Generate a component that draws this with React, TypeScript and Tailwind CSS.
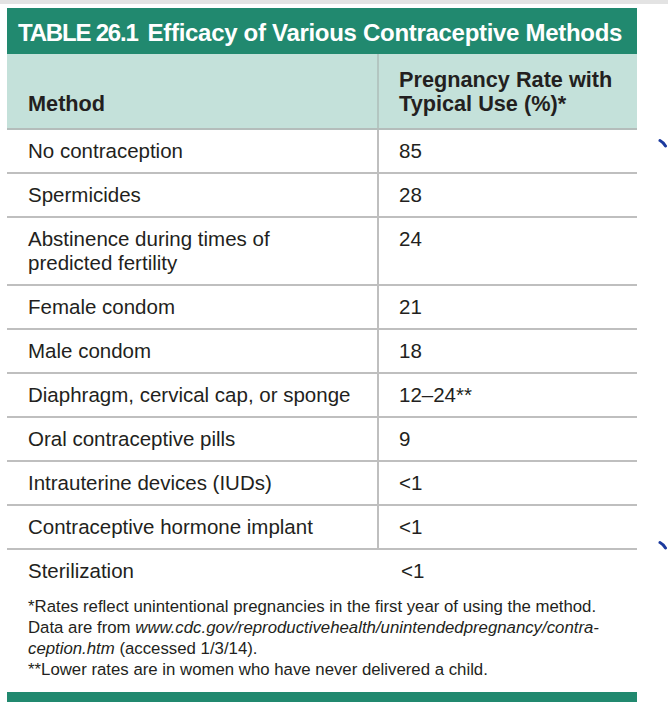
const rows: { method: React.ReactNode; rate: string }[] = [
  { method: "No contraception", rate: "85" },
  { method: "Spermicides", rate: "28" },
  {
    method: (
      <>
        Abstinence during times of
        <br />
        predicted fertility
      </>
    ),
    rate: "24",
  },
  { method: "Female condom", rate: "21" },
  { method: "Male condom", rate: "18" },
  { method: "Diaphragm, cervical cap, or sponge", rate: "12–24**" },
  { method: "Oral contraceptive pills", rate: "9" },
  { method: "Intrauterine devices (IUDs)", rate: "<1" },
  { method: "Contraceptive hormone implant", rate: "<1" },
];

const Tick = ({ top }: { top: number }) => (
  <svg
    className="absolute left-[658px]"
    style={{ top }}
    width="10"
    height="10"
    viewBox="0 0 10 10"
  >
    <path d="M2 2.5 Q5 4 7.5 8" stroke="#1b3a9e" strokeWidth="3" fill="none" strokeLinecap="round" />
  </svg>
);

export default function App() {
  return (
    <div className="relative w-[668px] h-[702px] overflow-hidden bg-white font-['Liberation_Sans',Arial,sans-serif] text-[#231f20]">
      <div className="h-[4px] bg-[#e3e3e3]" />
      <div className="ml-[7px] mt-[4px] w-[630px]">
        {/* title bar */}
        <div className="flex h-[46px] items-center bg-[#21896f] pl-[11px] pt-[3px] text-[24px] font-bold text-white">
          <span className="tracking-[-1.2px]">TABLE 26.1</span>
          <span className="ml-[10px] tracking-[-0.3px]">Efficacy of Various Contraceptive Methods</span>
        </div>

        {/* header */}
        <div className="grid grid-cols-[372px_1fr] border-b-2 border-[#b4bdbb] bg-[#c4e1da] text-[21.7px] font-bold leading-[24px]">
          <div className="flex items-end border-r-2 border-[#b3c6c1] pb-[12px] pl-[21px] pt-[14px]">Method</div>
          <div className="pb-[12px] pl-[20px] pt-[14px]">
            Pregnancy Rate with
            <br />
            Typical Use (%)*
          </div>
        </div>

        {/* body */}
        <div className="text-[20.5px] leading-[24px]">
          {rows.map((r, i) => (
            <div key={i} className="grid grid-cols-[372px_1fr] border-b-2 border-[#bfbfbf]">
              <div className="border-r-2 border-[#bfbfbf] pb-[9px] pl-[21px] pt-[9px]">{r.method}</div>
              <div className="pb-[9px] pl-[20px] pt-[9px]">{r.rate}</div>
            </div>
          ))}
          <div className="grid grid-cols-[372px_1fr]">
            <div className="pb-[9px] pl-[21px] pt-[9px]">Sterilization</div>
            <div className="pb-[9px] pl-[22px] pt-[9px]">&lt;1</div>
          </div>
        </div>

        {/* footnotes */}
        <div className="pl-[21px] pt-[4px] text-[16.8px] leading-[21px]">
          *Rates reflect unintentional pregnancies in the first year of using the method.
          <br />
          Data are from <i>www.cdc.gov/reproductivehealth/unintendedpregnancy/contra-</i>
          <br />
          <i>ception.htm</i> (accessed 1/3/14).
          <br />
          **Lower rates are in women who have never delivered a child.
        </div>

        <div className="mt-[12px] h-[10px] bg-[#21896f]" />
      </div>

      <Tick top={138} />
      <Tick top={540} />
    </div>
  );
}
